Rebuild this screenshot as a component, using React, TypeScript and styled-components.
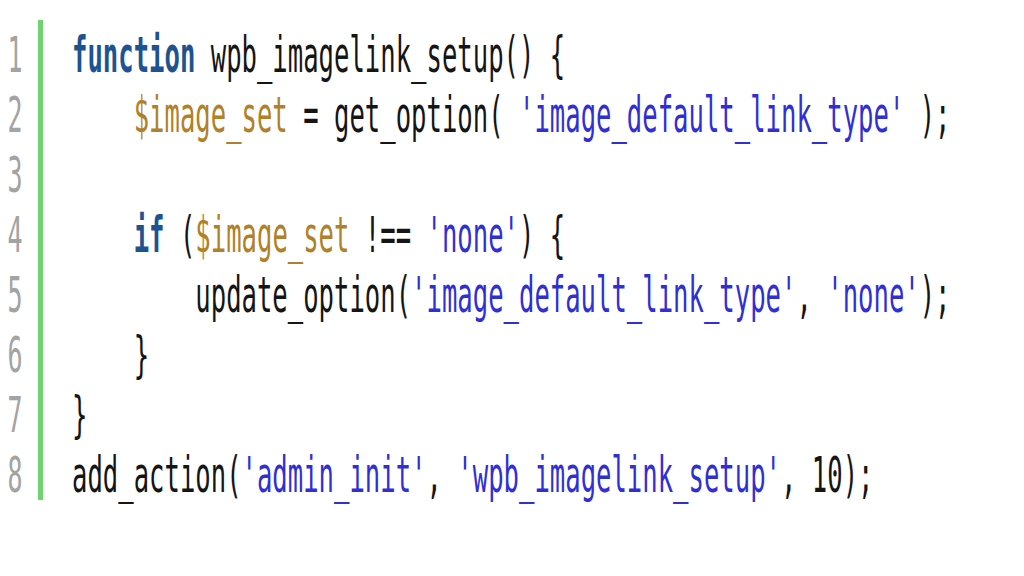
import React from "react";
import styled, { createGlobalStyle } from "styled-components";

const Global = createGlobalStyle`
  html, body { margin: 0; padding: 0; background: #ffffff; }
  body { width: 1024px; height: 576px; overflow: hidden; }
`;

const Page = styled.div`
  width: 1024px;
  height: 576px;
  background: #ffffff;
  padding-top: 20px;
  box-sizing: border-box;
  overflow: hidden;
`;

const Editor = styled.div`
  display: flex;
  align-items: flex-start;
  font-family: "DejaVu Sans Mono", "Liberation Mono", monospace;
  font-size: 50px;
  line-height: 60px;
`;

const Gutter = styled.div`
  display: flex;
  flex-direction: column;
  width: 30px;
  margin-right: 8px;
  padding-top: 5px;
`;

const LineNo = styled.div`
  height: 60px;
  display: flex;
  justify-content: center;
  color: #a3a3a3;
  span {
    display: inline-block;
    transform: scaleX(0.5);
    transform-origin: center;
  }
`;

const Code = styled.div`
  display: flex;
  flex-direction: column;
  height: 480px;
  width: 900px;
  box-sizing: border-box;
  padding-top: 5px;
  padding-left: 29px;
  border-left: 5px solid #6fd46f;
`;

const Line = styled.div`
  height: 60px;
  width: 1760px;
  white-space: pre;
  color: #151515;
  transform: scaleX(0.512);
  transform-origin: left center;
`;

const Kw = styled.span`
  color: #1d5391;
  font-weight: bold;
`;

const Var = styled.span`
  color: #b08128;
`;

const Str = styled.span`
  color: #2f2fd4;
`;

export default function App() {
  const lines: React.ReactNode[] = [
    <><Kw>function</Kw> wpb_imagelink_setup() {"{"}</>,
    <>    <Var>$image_set</Var> = get_option( <Str>'image_default_link_type'</Str> );</>,
    <>{" "}</>,
    <>    <Kw>if</Kw> (<Var>$image_set</Var> !== <Str>'none'</Str>) {"{"}</>,
    <>        update_option(<Str>'image_default_link_type'</Str>, <Str>'none'</Str>);</>,
    <>    {"}"}</>,
    <>{"}"}</>,
    <>add_action(<Str>'admin_init'</Str>, <Str>'wpb_imagelink_setup'</Str>, 10);</>,
  ];
  return (
    <>
      <Global />
      <Page>
        <Editor>
          <Gutter>
            {lines.map((_, i) => (
              <LineNo key={i}>
                <span>{i + 1}</span>
              </LineNo>
            ))}
          </Gutter>
          <Code>
            {lines.map((l, i) => (
              <Line key={i}>{l}</Line>
            ))}
          </Code>
        </Editor>
      </Page>
    </>
  );
}
